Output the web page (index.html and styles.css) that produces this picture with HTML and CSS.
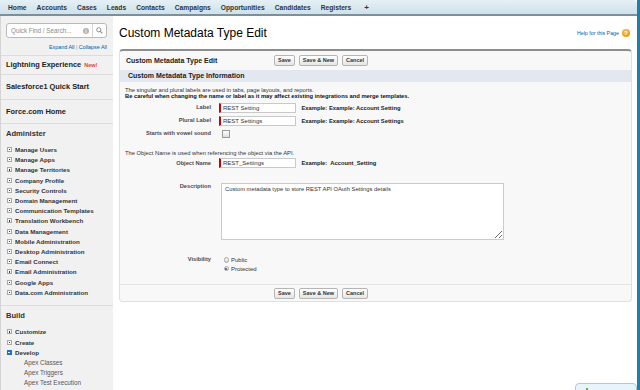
FILE: index.html
```html
<!DOCTYPE html>
<html lang="en">
<head>
    <meta charset="UTF-8">
    <meta name="viewport" content="width=device-width, initial-scale=1.0">
    <title>Custom Metadata Type Edit</title>
    <link rel="stylesheet" href="styles.css">
</head>
<body>
    <div class="screen">
        <div class="app">
            <!-- top tab bar -->
            <ul class="tabs">
                <li>Home</li>
                <li>Accounts</li>
                <li>Cases</li>
                <li>Leads</li>
                <li>Contacts</li>
                <li>Campaigns</li>
                <li>Opportunities</li>
                <li>Candidates</li>
                <li>Registers</li>
                <li class="plus">+</li>
            </ul>

            <div class="layout">
                <!-- setup sidebar -->
                <aside class="sidebar">
                    <div class="quickfind">
                        <span class="qf-text">Quick Find / Search...</span>
                        <span class="qf-info">i</span>
                        <span class="qf-search">
                            <svg width="7" height="7" viewBox="0 0 10 10"><circle cx="4" cy="4" r="3" fill="none" stroke="#8a8a8a" stroke-width="1.4"/><line x1="6.2" y1="6.2" x2="9.2" y2="9.2" stroke="#8a8a8a" stroke-width="1.6"/></svg>
                        </span>
                    </div>
                    <div class="expand"><a href="#">Expand All</a> | <a href="#">Collapse All</a></div>

                    <div class="side-link first">Lightning Experience <span class="new">New!</span></div>
                    <div class="side-link">Salesforce1 Quick Start</div>
                    <div class="side-link">Force.com Home</div>

                    <div class="side-group">
                        <h3>Administer</h3>
                        <ul class="tree">
                            <li><span class="node"></span>Manage Users</li>
                            <li><span class="node"></span>Manage Apps</li>
                            <li><span class="node"></span>Manage Territories</li>
                            <li><span class="node"></span>Company Profile</li>
                            <li><span class="node"></span>Security Controls</li>
                            <li><span class="node"></span>Domain Management</li>
                            <li><span class="node"></span>Communication Templates</li>
                            <li><span class="node"></span>Translation Workbench</li>
                            <li><span class="node"></span>Data Management</li>
                            <li><span class="node"></span>Mobile Administration</li>
                            <li><span class="node"></span>Desktop Administration</li>
                            <li><span class="node"></span>Email Connect</li>
                            <li><span class="node"></span>Email Administration</li>
                            <li><span class="node"></span>Google Apps</li>
                            <li><span class="node"></span>Data.com Administration</li>
                        </ul>
                    </div>

                    <div class="side-group">
                        <h3>Build</h3>
                        <ul class="tree">
                            <li><span class="node"></span>Customize</li>
                            <li><span class="node"></span>Create</li>
                            <li><span class="node open"></span>Develop</li>
                            <li class="sub">Apex Classes</li>
                            <li class="sub">Apex Triggers</li>
                            <li class="sub">Apex Test Execution</li>
                        </ul>
                    </div>
                </aside>

                <!-- main content -->
                <main class="content">
                    <div class="page-title">
                        <h1>Custom Metadata Type Edit</h1>
                        <a class="help" href="#">Help for this Page <span class="help-icon">?</span></a>
                    </div>

                    <div class="block">
                        <div class="block-head">
                            <h2>Custom Metadata Type Edit</h2>
                            <div class="btns">
                                <button class="btn">Save</button>
                                <button class="btn">Save &amp; New</button>
                                <button class="btn">Cancel</button>
                            </div>
                        </div>

                        <div class="section-head">Custom Metadata Type Information</div>

                        <div class="block-body">
                            <p class="note">The singular and plural labels are used in tabs, page layouts, and reports.<br><b>Be careful when changing the name or label as it may affect existing integrations and merge templates.</b></p>

                            <div class="row first-row">
                                <label>Label</label>
                                <div class="field"><input class="input" type="text" value="REST Setting"><span class="example">Example: Example: Account Setting</span></div>
                            </div>
                            <div class="row">
                                <label>Plural Label</label>
                                <div class="field"><input class="input" type="text" value="REST Settings"><span class="example">Example: Example: Account Settings</span></div>
                            </div>
                            <div class="row">
                                <label>Starts with vowel sound</label>
                                <div class="field"><span class="checkbox"></span></div>
                            </div>

                            <p class="note api">The Object Name is used when referencing the object via the API.</p>

                            <div class="row">
                                <label>Object Name</label>
                                <div class="field"><input class="input" type="text" value="REST_Settings"><span class="example">Example:&nbsp; Account_Setting</span></div>
                            </div>

                            <div class="row top desc-row">
                                <label>Description</label>
                                <div class="field"><textarea class="textarea">Custom metadata type to store REST API OAuth Settings details</textarea></div>
                            </div>

                            <div class="row top vis-row">
                                <label>Visibility</label>
                                <div class="radios">
                                    <div class="radio-line"><span class="radio"></span>Public</div>
                                    <div class="radio-line"><span class="radio checked"></span>Protected</div>
                                </div>
                            </div>
                        </div>

                        <div class="block-foot">
                            <div class="btns">
                                <button class="btn">Save</button>
                                <button class="btn">Save &amp; New</button>
                                <button class="btn">Cancel</button>
                            </div>
                        </div>
                    </div>
                </main>
            </div>
        </div>
        <div class="edge"></div>
    </div>

    <div class="toast"><span class="toast-mark"></span></div>
</body>
</html>
```

FILE: styles.css
```css
body {
    margin: 0;
    font-family: "Liberation Sans", Arial, sans-serif;
    background: #fff;
    color: #222;
}

a {
    color: #015ba7;
    text-decoration: none;
}

.screen {
    display: flex;
    height: 390px;
    overflow: hidden;
}

.app {
    flex: 1;
    display: flex;
    flex-direction: column;
    min-width: 0;
}

.edge {
    width: 3px;
    background: #1f7fa8;
}

/* tab bar */
.tabs {
    flex-shrink: 0;
    display: flex;
    align-items: center;
    gap: 10px;
    height: 14px;
    margin: 0;
    padding: 0 0 0 8px;
    list-style: none;
    background: linear-gradient(#e4f0f5, #cfe1ea);
    border-bottom: 2px solid #7b909d;
    border-top-right-radius: 4px;
    font-size: 6.7px;
    font-weight: bold;
    color: #333;
}

.tabs .plus {
    margin-left: 3px;
    font-size: 8px;
}

.layout {
    flex: 1;
    display: flex;
    min-height: 0;
}

/* sidebar */
.sidebar {
    width: 112px;
    background: #f1f1f1;
    border-left: 1px solid #d4d4d4;
}

.quickfind {
    display: flex;
    align-items: center;
    height: 15px;
    box-sizing: border-box;
    margin: 7px 6px 0 5px;
    background: #fff;
    border: 1px solid #b9b9b9;
    border-radius: 3px;
}

.qf-text {
    flex: 1;
    padding-left: 4px;
    font-size: 6.3px;
    color: #8a8a8a;
}

.qf-info {
    width: 6px;
    height: 6px;
    margin-right: 3px;
    border-radius: 50%;
    background: #b3b3b3;
    color: #fff;
    font-size: 5px;
    font-weight: bold;
    line-height: 6px;
    text-align: center;
}

.qf-search {
    display: flex;
    align-items: center;
    justify-content: center;
    width: 13px;
    height: 100%;
    border-left: 1px solid #d6d6d6;
}

.expand {
    margin: 5px 6px 4px 0;
    line-height: 8px;
    text-align: right;
    font-size: 5.4px;
    color: #999;
}

.side-link {
    padding: 0 5px;
    border-top: 1px solid #dcdcdc;
    line-height: 23.5px;
    font-size: 7.4px;
    font-weight: bold;
    color: #222;
}

.side-link.first {
    line-height: 17px;
}

.new {
    margin-left: 1px;
    font-size: 5.5px;
    color: #e63c3c;
}

.side-group {
    padding: 4px 0 8px;
    border-top: 1px solid #dcdcdc;
}

.side-group h3 {
    margin: 0 0 4.5px;
    padding-left: 5px;
    line-height: 12px;
    font-size: 7.6px;
    font-weight: bold;
    color: #333;
}

.tree {
    margin: 0;
    padding: 0;
    list-style: none;
}

.tree li {
    display: flex;
    align-items: center;
    height: 10.2px;
    padding-left: 5.5px;
    font-size: 6.2px;
    font-weight: bold;
    color: #333;
}

.node {
    position: relative;
    width: 5px;
    height: 5px;
    box-sizing: border-box;
    margin-right: 3.5px;
    background: #fafafa;
    border: 1px solid #a9a9a9;
}

.node::after {
    content: "";
    position: absolute;
    left: 1px;
    top: 1px;
    width: 1.2px;
    height: 1.2px;
    background: #333;
}

.node.open {
    background: #1d6fd0;
    border-color: #1d6fd0;
}

.node.open::after {
    left: 0.5px;
    top: 1.2px;
    width: 2px;
    height: 0.8px;
    background: #fff;
}

.tree li.sub {
    padding-left: 23px;
    font-weight: normal;
    font-size: 6.3px;
    color: #555;
}

/* main content */
.content {
    flex: 1;
    padding: 7px 5px 0 6px;
}

.page-title {
    display: flex;
    align-items: center;
    justify-content: space-between;
    height: 20px;
    margin-bottom: 6px;
    padding-right: 2px;
}

.page-title h1 {
    margin: 0;
    font-size: 12px;
    font-weight: normal;
    color: #000;
}

.help {
    display: flex;
    align-items: center;
    gap: 3px;
    font-size: 5.3px;
}

.help-icon {
    width: 8px;
    height: 8px;
    border-radius: 50%;
    background: radial-gradient(circle at 40% 35%, #fbc14f, #e48a00);
    color: #fff;
    font-size: 6px;
    font-weight: bold;
    line-height: 8px;
    text-align: center;
}

.block {
    background: #f8f8f8;
    border: 1px solid #e0e0e0;
    border-top: 2px solid #8d8d8d;
    border-radius: 4px;
}

.block-head {
    display: flex;
    align-items: center;
    height: 18px;
    padding-left: 6px;
}

.block-head h2 {
    width: 148px;
    margin: 0;
    font-size: 7px;
    font-weight: bold;
    color: #222;
}

.btns {
    display: flex;
    gap: 4px;
}

.btn {
    height: 11px;
    padding: 0 3px;
    background: linear-gradient(#fff, #e5e5e5);
    border: 1px solid #b5b5b5;
    border-radius: 2px;
    font-family: "Liberation Sans", Arial, sans-serif;
    font-size: 5.5px;
    font-weight: bold;
    line-height: 9px;
    color: #333;
}

.section-head {
    height: 12px;
    margin-top: 1px;
    padding-left: 8px;
    background: #e3e7f0;
    line-height: 12px;
    font-size: 7px;
    font-weight: bold;
    color: #222;
}

.block-body {
    padding: 4.6px 0 11.5px;
}

.note {
    margin: 0 0 0 5px;
    font-size: 5.8px;
    line-height: 6.8px;
    color: #333;
}

.note b {
    color: #111;
}

.note.api {
    margin-top: 10px;
}

.row {
    display: grid;
    grid-template-columns: 91px 1fr;
    column-gap: 8px;
    align-items: center;
    min-height: 13px;
}

.row.first-row {
    margin-top: 1px;
}

.row.top {
    align-items: start;
}

.row label {
    text-align: right;
    font-size: 5.7px;
    font-weight: bold;
    line-height: 7px;
    color: #4a4a56;
}

.field {
    display: flex;
    align-items: center;
}

.input {
    width: 77px;
    height: 10px;
    box-sizing: border-box;
    margin: 0;
    padding: 0 2px;
    background: #fff;
    border: 1px solid #c9c9c9;
    border-left: 2px solid #c00;
    font-family: "Liberation Sans", Arial, sans-serif;
    font-size: 6px;
    color: #333;
}

.example {
    margin-left: 5.5px;
    font-size: 5.8px;
    font-weight: bold;
    color: #222;
}

.checkbox {
    width: 6px;
    height: 6px;
    margin-left: 3px;
    background: linear-gradient(#fff, #ddd);
    border: 1px solid #9a9a9a;
}

.desc-row {
    margin-top: 13px;
}

.textarea {
    width: 283px;
    height: 57px;
    box-sizing: border-box;
    margin: 0 0 0 2px;
    padding: 2px 3px;
    background: #fff;
    border: 1px solid #cbcbcb;
    font-family: "Liberation Sans", Arial, sans-serif;
    font-size: 5.8px;
    color: #333;
}

.vis-row {
    margin-top: 16px;
}

.radio-line {
    display: flex;
    align-items: center;
    height: 8.5px;
    padding-left: 4.5px;
    font-size: 6px;
    color: #333;
}

.radio {
    position: relative;
    width: 5.5px;
    height: 5.5px;
    box-sizing: border-box;
    margin-right: 2px;
    border: 1px solid #a5a5a5;
    border-radius: 50%;
    background: linear-gradient(#fafafa, #d9d9d9);
}

.radio.checked::after {
    content: "";
    position: absolute;
    left: 0.8px;
    top: 0.8px;
    width: 2px;
    height: 2px;
    border-radius: 50%;
    background: #2d4f7a;
}

.block-foot {
    padding: 2.5px 0 2.5px 154px;
    border-top: 1px solid #e3e3e3;
}

/* chat popup peeking in at the bottom right */
.toast {
    position: fixed;
    left: 575px;
    top: 383px;
    width: 60px;
    height: 12px;
    background: #e8f4fb;
    border: 1px solid #b7c6d1;
    border-radius: 4px 4px 0 0;
}

.toast-mark {
    position: absolute;
    left: 10px;
    top: 4px;
    width: 2px;
    height: 3px;
    background: #6aa84f;
}
```
